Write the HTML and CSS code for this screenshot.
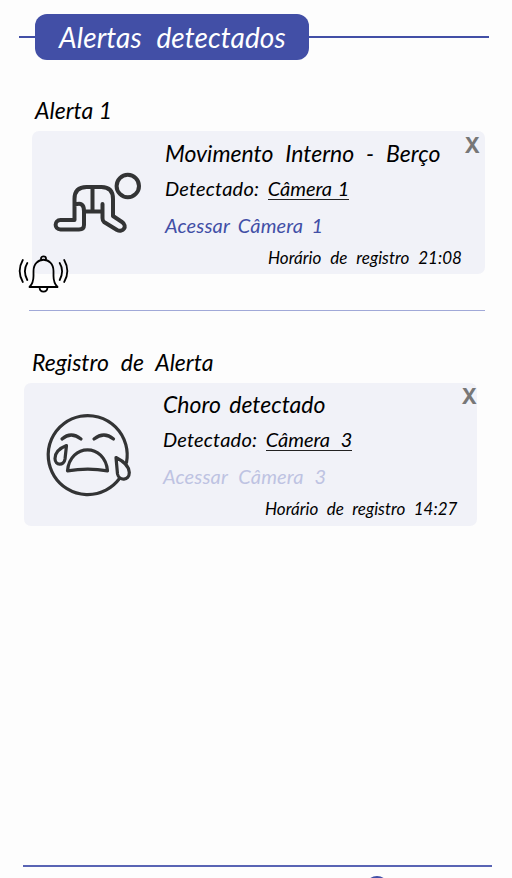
FILE: index.html
```html
<!DOCTYPE html>
<html lang="pt-BR">
<head>
<meta charset="utf-8">
<title>Alertas detectados</title>
<link rel="stylesheet" href="styles.css">
</head>
<body>
<div class="screen">
  <header class="header"><h1 class="title">Alertas detectados</h1></header>
  <main>
    <section class="alert alert-active">
      <h2 class="label">Alerta 1</h2>
      <article class="card">
        <svg class="figure" viewBox="0 0 120 143" fill="none" stroke="#333435" stroke-width="4" stroke-linecap="round" stroke-linejoin="round">
          <circle cx="95.800" cy="55" r="11.200"/>
          <path d="M42.500 89V68Q42.500 56 54.500 56H69.500Q81 56 81 68V85L90 91C96 95 91 102 85 99L72 91Q70.500 90 70.500 87V73M42.500 74Q52 70 52 80V94Q52 98.500 47 98.500H28.500C22 98.500 22 89 28.500 89H42.500M60.500 57V80M53 80.500H69"/>
        </svg>
        <div class="info">
          <h3 class="name">Movimento Interno - Berço</h3>
          <p class="found"><span>Detectado:</span><u>Câmera 1</u></p>
          <a class="access">Acessar Câmera 1</a>
          <p class="time">Horário de registro 21:08</p>
        </div>
        <span class="close">X</span>
        <svg class="bell" viewBox="0 0 52 40" fill="none" stroke="#000" stroke-width="1.800" stroke-linecap="round" stroke-linejoin="round">
          <path d="M11.500 33Q15.500 29 15.500 22V17C15.500 2 35.500 2 35.500 17V22Q35.500 29 39.500 33ZM23 6.200V4.500C23 1.600 28 1.600 28 4.500V6.200M21.500 33.500C22 39 29 39 29.500 33.500M4.800 6Q-1.500 17 4.800 28M9.300 9Q4.500 17 9.300 26M41.700 9Q46.500 17 41.700 26M46.200 6Q52.500 17 46.200 28"/>
        </svg>
      </article>
    </section>
    <div class="divider"></div>
    <section class="alert alert-past">
      <h2 class="label">Registro de Alerta</h2>
      <article class="card">
        <svg class="figure" viewBox="0 0 120 143" fill="none" stroke="#333435" stroke-width="3.200" stroke-linecap="round" stroke-linejoin="round">
          <path d="M95.500 95.500A39.500 39.500 0 1 1 102.500 79.500"/>
          <path d="M38 56Q47 48 57 56M70 56Q80 48 89.500 56M43.500 87.800C46 60 81 60 83.500 87.800Q64 84.500 43.500 87.800ZM42.500 62.500Q31 67 31 75.500C31 83 40 83 41 76ZM92 74.500Q105 81 105.300 89.500C105.300 98 95 98 93.500 91Z"/>
        </svg>
        <div class="info">
          <h3 class="name">Choro detectado</h3>
          <p class="found"><span>Detectado:</span><u>Câmera 3</u></p>
          <a class="access">Acessar Câmera 3</a>
          <p class="time">Horário de registro 14:27</p>
        </div>
        <span class="close">X</span>
      </article>
    </section>
  </main>
  <footer class="footer"><span class="dot"></span></footer>
</div>
</body>
</html>
```
FILE: styles.css
```css
* { box-sizing: border-box; margin: 0; padding: 0; }
body { background: #fdfdfd; color: #000; font-family: Lato, "Liberation Sans", sans-serif; font-style: italic; }
.screen { height: 878px; display: flex; flex-direction: column; overflow: hidden; }
main { flex: 1; }
h1, h2, h3 { font-weight: 400; }
h1, h2, p, h3, .access { white-space: nowrap; }
.header { display: flex; align-items: center; height: 46px; margin: 14px 23px 0 19px; }
.header::before, .header::after { content: ""; height: 1.5px; background: #424fa6; }
.header::before { width: 16px; }
.header::after { flex: 1; }
.title { width: 274px; height: 46.500px; padding-left: 24px; border-radius: 12px; background: #424fa6; color: #fff; font-size: 28px; line-height: 47px; letter-spacing: .1px; word-spacing: 8px; }
.alert-active { margin: 35px 27px 0 32px; }
.alert-past { margin: 36px 35px 0 24px; }
.label { height: 36px; font-size: 23px; line-height: 31px; padding-left: 3px; }
.alert-past .label { padding-left: 8px; line-height: 30px; word-spacing: 6.500px; }
.card { position: relative; display: flex; height: 143px; border-radius: 7px; background: #f1f2f8; }
.figure { flex: none; width: 120px; height: 143px; }
.info { flex: 1; padding-left: 13px; }
.name { height: 39px; padding-top: 7px; font-size: 23px; line-height: 31px; word-spacing: 6.500px; }
.found { display: flex; gap: 8.500px; height: 36px; font-size: 20px; line-height: 37px; }
.found span { letter-spacing: .2px; }
.found u { height: 30px; border-bottom: 1px solid #222; text-decoration: none; word-spacing: 1px; }
.access { display: block; height: 36px; color: #424fa6; font-size: 20px; line-height: 38px; letter-spacing: .15px; word-spacing: 3.500px; }
.time { padding-left: 103px; font-size: 17px; line-height: 31px; word-spacing: 5px; }
.alert-past .info { padding-left: 19px; margin-top: -1px; }
.alert-past .name { word-spacing: 3px; }
.alert-past .found u { word-spacing: 6px; }
.alert-past .access { color: #bec3e2; word-spacing: 6px; }
.alert-past .time { padding-left: 102px; word-spacing: 4.500px; }
.close { position: absolute; top: 2px; right: 5px; color: #777; font: 700 21px/25px Inter, sans-serif; }
.alert-past .close { top: 1px; right: 0; }
.bell { position: absolute; left: -14px; top: 123px; width: 52px; height: 40px; }
.divider { height: 1px; margin: 36px 27px 0 29px; background: #a1a9d8; }
.footer { height: 13px; margin: 0 20px 0 23px; border-top: 2px solid #5964b4; }
.dot { display: block; width: 24px; height: 24px; margin: 9px 0 0 342px; border: 2px solid #424fa6; border-radius: 50%; }
```
